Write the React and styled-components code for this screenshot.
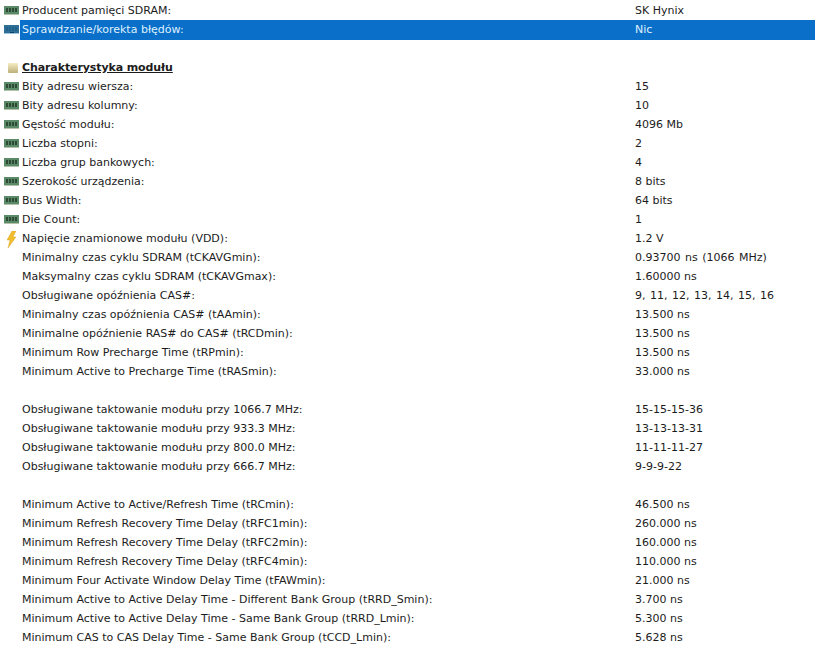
import React from "react";
import styled, { createGlobalStyle } from "styled-components";

const GlobalStyle = createGlobalStyle`
  html, body {
    margin: 0;
    padding: 0;
    background: #fff;
  }
`;

const List = styled.div`
  width: 815px;
  height: 663px;
  padding-top: 1px;
  box-sizing: border-box;
  overflow: hidden;
  font-family: "DejaVu Sans", Verdana, sans-serif;
  font-size: 11px;
  color: #1c1c1c;
`;

const Row = styled.div`
  display: grid;
  grid-template-columns: 20px 615px 1fr;
  height: 19px;
  line-height: 20px;
  white-space: nowrap;
`;

const IconCell = styled.div`
  display: flex;
  align-items: center;
  justify-content: flex-start;
  padding-left: 4px;
`;

const Label = styled.div`
  padding-left: 2px;
  background: ${(p) => (p.$selected ? "#0a6fc9" : "transparent")};
  color: ${(p) => (p.$selected ? "#dff1ff" : "inherit")};
  font-weight: ${(p) => (p.$heading ? 700 : 400)};
  text-decoration: ${(p) => (p.$heading ? "underline" : "none")};
  letter-spacing: ${(p) => (p.$heading ? "-0.1px" : "0")};
`;

const Value = styled.div`
  background: ${(p) => (p.$selected ? "#0a6fc9" : "transparent")};
  color: ${(p) => (p.$selected ? "#dff1ff" : "inherit")};
  word-spacing: ${(p) => (p.$wide ? "1px" : "0")};
`;

const RamSvg = styled.svg`
  margin-top: -1px;
`;

const SectionSvg = styled.svg`
  margin-left: 3px;
`;

const BoltSvg = styled.svg`
  margin-left: 3px;
`;

function RamIcon({ selected }) {
  const body = selected ? "#2f6f96" : "#5b8a68";
  const chip = selected ? "#24618a" : "#2c4a34";
  return (
    <RamSvg width="15" height="9" viewBox="0 0 15 9">
      <rect x="0" y="0" width="15" height="8" fill={body} />
      {[2, 5, 8, 11].map((x) => (
        <rect key={x} x={x} y="2" width="2" height="4" fill={chip} />
      ))}
      {selected && <rect x="6" y="7" width="4" height="2" fill="#0b3f66" />}
      <rect x="0" y="8" width="15" height="1" fill={selected ? "#9cc3dd" : "#b4c2aa"} />
    </RamSvg>
  );
}

function SectionIcon() {
  return (
    <SectionSvg width="12" height="10" viewBox="0 0 12 10">
      <defs>
        <linearGradient id="sec" x1="0" y1="0" x2="0" y2="1">
          <stop offset="0" stopColor="#f6ecc4" />
          <stop offset="1" stopColor="#bdb07a" />
        </linearGradient>
      </defs>
      <rect x="1" y="0" width="10" height="10" rx="1" fill="url(#sec)" />
    </SectionSvg>
  );
}

function BoltIcon() {
  return (
    <BoltSvg width="9" height="17" viewBox="0 0 9 17">
      <path d="M5 0 L9 0 L6 6 L9 6 L1 17 L3 9 L0 9 Z" fill="#f0bd2c" stroke="#d79c1c" strokeWidth="0.4" />
    </BoltSvg>
  );
}

const rows = [
  { icon: "ram", label: "Producent pamięci SDRAM:", value: "SK Hynix" },
  { icon: "ram", label: "Sprawdzanie/korekta błędów:", value: "Nic", selected: true },
  {},
  { icon: "section", label: "Charakterystyka modułu", heading: true },
  { icon: "ram", label: "Bity adresu wiersza:", value: "15" },
  { icon: "ram", label: "Bity adresu kolumny:", value: "10" },
  { icon: "ram", label: "Gęstość modułu:", value: "4096 Mb" },
  { icon: "ram", label: "Liczba stopni:", value: "2" },
  { icon: "ram", label: "Liczba grup bankowych:", value: "4" },
  { icon: "ram", label: "Szerokość urządzenia:", value: "8 bits" },
  { icon: "ram", label: "Bus Width:", value: "64 bits" },
  { icon: "ram", label: "Die Count:", value: "1" },
  { icon: "bolt", label: "Napięcie znamionowe modułu (VDD):", value: "1.2 V" },
  { label: "Minimalny czas cyklu SDRAM (tCKAVGmin):", value: "0.93700 ns (1066 MHz)", wide: true },
  { label: "Maksymalny czas cyklu SDRAM (tCKAVGmax):", value: "1.60000 ns" },
  { label: "Obsługiwane opóźnienia CAS#:", value: "9, 11, 12, 13, 14, 15, 16", wide: true },
  { label: "Minimalny czas opóźnienia CAS# (tAAmin):", value: "13.500 ns" },
  { label: "Minimalne opóźnienie RAS# do CAS# (tRCDmin):", value: "13.500 ns" },
  { label: "Minimum Row Precharge Time (tRPmin):", value: "13.500 ns" },
  { label: "Minimum Active to Precharge Time (tRASmin):", value: "33.000 ns" },
  {},
  { label: "Obsługiwane taktowanie modułu przy 1066.7 MHz:", value: "15-15-15-36" },
  { label: "Obsługiwane taktowanie modułu przy 933.3 MHz:", value: "13-13-13-31" },
  { label: "Obsługiwane taktowanie modułu przy 800.0 MHz:", value: "11-11-11-27" },
  { label: "Obsługiwane taktowanie modułu przy 666.7 MHz:", value: "9-9-9-22" },
  {},
  { label: "Minimum Active to Active/Refresh Time (tRCmin):", value: "46.500 ns" },
  { label: "Minimum Refresh Recovery Time Delay (tRFC1min):", value: "260.000 ns" },
  { label: "Minimum Refresh Recovery Time Delay (tRFC2min):", value: "160.000 ns" },
  { label: "Minimum Refresh Recovery Time Delay (tRFC4min):", value: "110.000 ns" },
  { label: "Minimum Four Activate Window Delay Time (tFAWmin):", value: "21.000 ns" },
  { label: "Minimum Active to Active Delay Time - Different Bank Group (tRRD_Smin):", value: "3.700 ns" },
  { label: "Minimum Active to Active Delay Time - Same Bank Group (tRRD_Lmin):", value: "5.300 ns" },
  { label: "Minimum CAS to CAS Delay Time - Same Bank Group (tCCD_Lmin):", value: "5.628 ns" },
];

export default function App() {
  return (
    <>
      <GlobalStyle />
      <List>
        {rows.map((r, i) => (
          <Row key={i}>
            <IconCell>
              {r.icon === "ram" && <RamIcon selected={r.selected} />}
              {r.icon === "section" && <SectionIcon />}
              {r.icon === "bolt" && <BoltIcon />}
            </IconCell>
            <Label $selected={r.selected} $heading={r.heading}>
              {r.label}
            </Label>
            <Value $selected={r.selected} $wide={r.wide}>
              {r.value}
            </Value>
          </Row>
        ))}
      </List>
    </>
  );
}
